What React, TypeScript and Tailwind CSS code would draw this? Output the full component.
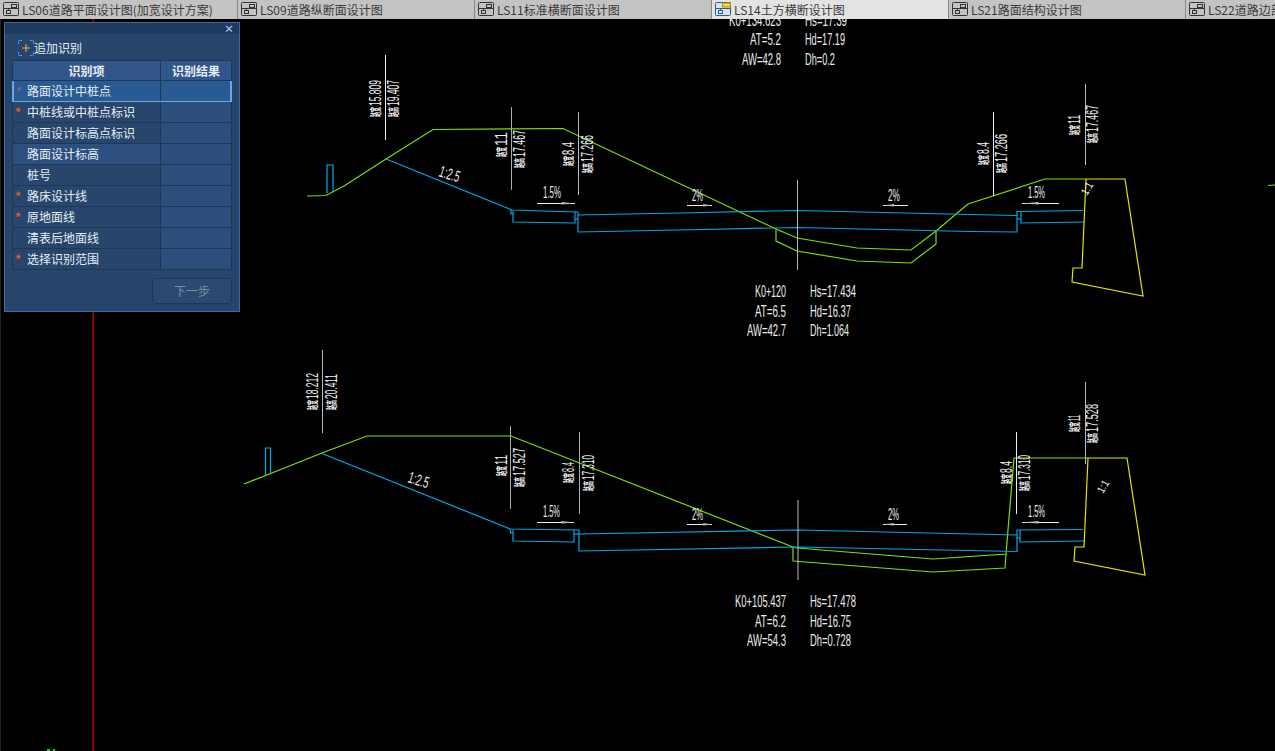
const tabs = [
  "LS06道路平面设计图(加宽设计方案)",
  "LS09道路纵断面设计图",
  "LS11标准横断面设计图",
  "LS14土方横断设计图",
  "LS21路面结构设计图",
  "LS22道路边部设计图",
];

const rows = [
  { label: "路面设计中桩点", star: "gray", active: true },
  { label: "中桩线或中桩点标识", star: "red" },
  { label: "路面设计标高点标识" },
  { label: "路面设计标高", light: true },
  { label: "桩号" },
  { label: "路床设计线", star: "red" },
  { label: "原地面线", star: "red" },
  { label: "清表后地面线" },
  { label: "选择识别范围", star: "red" },
];

const GREEN = "#7ce000";
const BLUE = "#00a8e8";
const YELLOW = "#e6e600";

function TabIcon({ active }: { active: boolean }) {
  const c = active ? "#1f5fa8" : "#333";
  return (
    <svg width="17" height="15" viewBox="0 0 17 15" className="shrink-0" fill="none">
      <rect x="0.5" y="0.5" width="15" height="13" rx="1" stroke={c} />
      {active && <rect x="7.5" y="1" width="8" height="4" fill="#f5d33a" stroke="#b58a00" />}
      {!active && <rect x="8.5" y="2.5" width="5" height="3" stroke={c} />}
      <rect x="3.5" y="8.5" width="4" height="3" stroke={c} />
      <path d="M1 6.5H15M5.5 6.5V8.5" stroke={c} />
    </svg>
  );
}

function Line({ p, c, w = 1.2 }: { p: string; c: string; w?: number }) {
  return <polyline points={p} fill="none" stroke={c} strokeWidth={w} />;
}

function Lbl({ x, y, w, s, size = 16 }: { x: number; y: number; w: number; s: string; size?: number }) {
  return (
    <text x={x} y={y} fontSize={size} fill="#ececec" textLength={w} lengthAdjust="spacingAndGlyphs">
      {s}
    </text>
  );
}

// vertical label: small chinese prefix then the number, reading upward
function V({ x, y, len, pre, num }: { x: number; y: number; len: number; pre: string; num: string }) {
  return (
    <g transform={`translate(${x} ${y}) rotate(-90)`} fill="#f0f0f0">
      <text x={0} y={-1} fontSize={11} fontWeight={700} textLength={10} lengthAdjust="spacingAndGlyphs">
        {pre}
      </text>
      <text x={11} y={0} fontSize={16} textLength={len - 11} lengthAdjust="spacingAndGlyphs">
        {num}
      </text>
    </g>
  );
}

function Slope({ s, x, y, w, x1, x2, ly, flip }: { s: string; x: number; y: number; w: number; x1: number; x2: number; ly: number; flip?: boolean }) {
  const mid = flip ? x1 + (x2 - x1) * 0.45 : x1 + (x2 - x1) * 0.65;
  return (
    <g>
      <Lbl x={x} y={y} w={w} s={s} size={16} />
      <line x1={x1} x2={x2} y1={ly + 0.5} y2={ly + 0.5} stroke="#f0f0f0" />
      {flip ? (
        <polygon points={`${x1},${ly + 0.5} ${mid},${ly - 1} ${mid},${ly + 1.5}`} fill="#bbb" />
      ) : (
        <polygon points={`${mid},${ly - 1} ${x2},${ly + 0.5} ${mid},${ly + 1.5}`} fill="#bbb" />
      )}
    </g>
  );
}

function Cad() {
  return (
    <svg
      viewBox="0 19 1275 732"
      className="block h-full w-full [font-family:'Liberation_Sans','Noto_Sans_CJK_SC',sans-serif]"
    >
      <line x1="93.300" x2="93.300" y1="19" y2="751" stroke="#b00000" strokeWidth="1.600" />
      <line x1="0.5" x2="0.5" y1="19" y2="751" stroke="#222" />
      <line x1="1268" x2="1275" y1="185.5" y2="185" stroke={GREEN} />
      <rect x="47" y="749" width="3" height="2" fill="#00d800" />
      <rect x="53" y="749" width="2" height="2" fill="#00d800" />

      {/* top section remainder */}
      <Lbl x={729} y={26} w={52} s="K0+134.623" />
      <Lbl x={805} y={26} w={42} s="Hs=17.39" />
      <Lbl x={750} y={45} w={31} s="AT=5.2" />
      <Lbl x={805} y={45} w={40} s="Hd=17.19" />
      <Lbl x={742} y={65} w={39} s="AW=42.8" />
      <Lbl x={805} y={65} w={30} s="Dh=0.2" />

      {/* section K0+120 */}
      <Line c={BLUE} p="327,193 327,165 333,165 333,192" />
      <Line c={GREEN} p="307,196 326,195.5 344,186 386,159 433,129.5 563,128.5 776,229 797,238 857,248 911,250 936,231 968,204 1045,179 1086,179" />
      <Line c={GREEN} p="776,229 776,241 797,251 857,261 911,263 936,244 936,231" />
      <Line c={BLUE} p="386,159 512,210 576,212 578,212" />
      <Line c={BLUE} p="511,210 511,214 513,214" />
      <Line c={BLUE} p="513,211 513,222 575,223 575,212" />
      <Line c={BLUE} p="575,219 578,219" />
      <Line c={BLUE} p="578,212 578,232 680,230 797,227.5 970,231.5 1017,232 1017,211.5 1083,210.5" />
      <Line c={BLUE} p="578,215 680,213 797,210.5 970,214.5 1017,215.5" />
      <Line c={BLUE} p="1017,219 1021,219" />
      <Line c={BLUE} p="1021,212 1021,223 1084,222" />
      <Line c={YELLOW} p="1086,179 1125,179 1143,296 1072,282 1073,268 1082,268 1086,179" />

      <line x1="385.5" x2="385.5" y1="55" y2="140" stroke="#eee" />
      <line x1="511.5" x2="511.5" y1="107" y2="190" stroke="#aaa" />
      <line x1="578.5" x2="578.5" y1="112" y2="195" stroke="#bbb" />
      <line x1="797.5" x2="797.5" y1="180" y2="270" stroke="#bbb" />
      <line x1="993.5" x2="993.5" y1="112" y2="196" stroke="#eee" />
      <line x1="1085.5" x2="1085.5" y1="84" y2="165" stroke="#bbb" />

      <V x={381} y={117} len={37} pre="路宽" num="15.809" />
      <V x={399} y={117} len={37} pre="路高" num="19.407" />
      <V x={507} y={157} len={25} pre="路宽" num="11" />
      <V x={525} y={168} len={38} pre="路高" num="17.467" />
      <V x={574} y={166} len={24} pre="路宽" num="8.4" />
      <V x={593} y={173} len={38} pre="路高" num="17.266" />
      <V x={989} y={165} len={23} pre="路宽" num="8.4" />
      <V x={1007} y={173} len={39} pre="路高" num="17.266" />
      <V x={1080} y={135} len={20} pre="路宽" num="11" />
      <V x={1098} y={143} len={38} pre="路高" num="17.467" />

      <g transform="translate(438 176) rotate(18)">
        <Lbl x={0} y={0} w={21} s="1:2.5" size={16} />
      </g>
      <Slope s="1.5%" x={543} y={198} w={18} x1={537} x2={575} ly={203} />
      <Slope s="2%" x={692} y={201} w={11} x1={687} x2={712} ly={205} />
      <Slope s="2%" x={888} y={201} w={12} x1={883} x2={908} ly={205} flip />
      <Slope s="1.5%" x={1028} y={198} w={17} x1={1022} x2={1059} ly={203} flip />
      <g transform="translate(1087 196) rotate(-60)">
        <Lbl x={0} y={0} w={13} s="1:1" size={11} />
      </g>

      <Lbl x={755} y={297} w={31} s="K0+120" />
      <Lbl x={810} y={297} w={46} s="Hs=17.434" />
      <Lbl x={755} y={317} w={31} s="AT=6.5" />
      <Lbl x={810} y={317} w={41} s="Hd=16.37" />
      <Lbl x={747} y={336} w={39} s="AW=42.7" />
      <Lbl x={810} y={336} w={39} s="Dh=1.064" />

      {/* section K0+105.437 */}
      <Line c={BLUE} p="265.5,475 265.5,448 270.5,448 270.5,473" />
      <Line c={GREEN} p="244,484 322,453 367,436 511,436 793,547 797,548 933,559 1006,554 1014,458 1087,458" />
      <Line c={GREEN} p="793,547 793,561 933,572 1005,568 1006,554" />
      <Line c={BLUE} p="322,453.5 510.5,529 579,530" />
      <Line c={BLUE} p="510.5,529 510.5,533 513,533" />
      <Line c={BLUE} p="513,530 513,541 574,542 574,530" />
      <Line c={BLUE} p="574,534 579,534" />
      <Line c={BLUE} p="579,530 579,551 797,547 1017,551.5 1017,530 1083,529.5" />
      <Line c={BLUE} p="579,534 797,530 1017,535" />
      <Line c={BLUE} p="1017,538 1020,538" />
      <Line c={BLUE} p="1020,530 1020,542 1084,541" />
      <Line c={YELLOW} p="1087,458 1127,458 1145,575 1074,561 1075,547 1084,547 1088,458" />

      <line x1="322.5" x2="322.5" y1="350" y2="433" stroke="#bbb" />
      <line x1="510.5" x2="510.5" y1="426" y2="509" stroke="#aaa" />
      <line x1="579.5" x2="579.5" y1="432" y2="514" stroke="#aaa" />
      <line x1="798" x2="798" y1="500" y2="580" stroke="#bbb" />
      <line x1="1016.5" x2="1016.5" y1="432" y2="514" stroke="#eee" />
      <line x1="1085.5" x2="1085.5" y1="382" y2="464" stroke="#bbb" />

      <V x={318} y={410} len={37} pre="路宽" num="18.212" />
      <V x={337} y={410} len={36} pre="路高" num="20.411" />
      <V x={507} y={476} len={21} pre="路宽" num="11" />
      <V x={525} y={487} len={39} pre="路高" num="17.527" />
      <V x={574} y={483} len={21} pre="路宽" num="8.4" />
      <V x={594} y={491} len={36} pre="路高" num="17.310" />
      <V x={1012} y={484} len={23} pre="路宽" num="8.4" />
      <V x={1030} y={491} len={36} pre="路高" num="17.310" />
      <V x={1080} y={432} len={17} pre="路宽" num="11" />
      <V x={1098} y={443} len={39} pre="路高" num="17.528" />

      <g transform="translate(407 482) rotate(18)">
        <Lbl x={0} y={0} w={21} s="1:2.5" size={16} />
      </g>
      <Slope s="1.5%" x={543} y={517} w={17} x1={537} x2={574} ly={522} />
      <Slope s="2%" x={692} y={520} w={11} x1={687} x2={712} ly={524} />
      <Slope s="2%" x={888} y={520} w={11} x1={883} x2={907} ly={524} flip />
      <Slope s="1.5%" x={1028} y={517} w={17} x1={1022} x2={1059} ly={522} flip />
      <g transform="translate(1103 494) rotate(-60)">
        <Lbl x={0} y={0} w={13} s="1:1" size={11} />
      </g>

      <Lbl x={735} y={607} w={51} s="K0+105.437" />
      <Lbl x={810} y={607} w={46} s="Hs=17.478" />
      <Lbl x={755} y={627} w={31} s="AT=6.2" />
      <Lbl x={810} y={627} w={41} s="Hd=16.75" />
      <Lbl x={747} y={646} w={39} s="AW=54.3" />
      <Lbl x={810} y={646} w={41} s="Dh=0.728" />
    </svg>
  );
}

function Panel() {
  return (
    <div className="absolute left-[4px] top-[3px] w-[236px] h-[290px] bg-[#28466c] border border-[#3f69a3] flex flex-col text-[12px] leading-none text-[#e6edf5]">
      <div className="h-[11px] shrink-0 bg-[#1f3a5c] flex items-center justify-end pr-[5px]">
        <span className="text-[10px] font-bold text-[#b8cfe8] leading-none">×</span>
      </div>
      <div className="h-[25px] mt-[1px] pl-[13px] flex items-center shrink-0">
        <svg width="16" height="16" viewBox="0 0 16 16" fill="none" className="shrink-0">
          <path d="M4 .5H1.500a1 1 0 0 0-1 1V4M12 .5h2.500a1 1 0 0 1 1 1V4M4 15.500H1.500a1 1 0 0 1-1-1V12M12 15.500h2.500a1 1 0 0 0 1-1V12" stroke="#4a9bf0" />
          <path d="M8 4v8M4 8h8" stroke="#eaa36a" />
        </svg>
        <span>追加识别</span>
      </div>
      <div className="mx-[7px] border border-[#1e3657] border-b-0 shrink-0">
        <div className="flex h-[20px] bg-[#30568a] font-bold border-b border-[#1e3657]">
          <div className="w-[148px] flex items-center justify-center border-r border-[#1e3657]">识别项</div>
          <div className="flex-1 flex items-center justify-center">识别结果</div>
        </div>
        {rows.map((r) => (
          <div
            key={r.label}
            className={`flex h-[21px] border-b ${r.active ? "bg-[#2a5a92] border-x-2 border-x-[#6aa6e8] border-b-[#6aa6e8] -mx-px" : "border-[#1e3657]"}`}
          >
            <div
              className={`flex items-center border-r border-[#1e3657] ${r.active ? "w-[147px]" : r.light ? "w-[148px] bg-[#2e5080]" : "w-[148px] bg-[#28466c]"}`}
            >
              <span
                className={`pl-[2px] text-[12px] font-bold ${r.active ? "w-[13px]" : "w-[14px]"} ${r.star === "red" ? "text-[#e8591a]" : "text-[#7c6a70]"}`}
              >
                {r.star ? "*" : ""}
              </span>
              <span>{r.label}</span>
            </div>
            <div className={`flex-1 ${r.active ? "" : "bg-[#2c4e7c]"}`} />
          </div>
        ))}
      </div>
      <div className="mt-[8px] mr-[7px] self-end w-[80px] h-[26px] rounded-[4px] border border-[#1e3657] bg-[#2a4a74] flex items-center justify-center text-[#7f8c9c]">
        下一步
      </div>
    </div>
  );
}

export default function App() {
  return (
    <div className="w-[1275px] h-[751px] overflow-hidden bg-black flex flex-col [font-family:'Noto_Sans_CJK_SC','Liberation_Sans',sans-serif]">
      <div className="h-[19px] shrink-0 flex bg-[#c3c3c3]">
        {tabs.map((t, i) => (
          <div
            key={t}
            className={`w-[237px] shrink-0 h-full flex items-center gap-[2px] pl-[3px] text-[12px] leading-none whitespace-nowrap overflow-hidden text-[#3a3a3a] ${
              i === 0 ? "" : "border-l border-[#8a8a8a]"
            } ${i === 3 ? "bg-[#e3e3e3]" : ""}`}
          >
            <TabIcon active={i === 3} />
            <span>{t}</span>
          </div>
        ))}
      </div>
      <div className="relative flex-1 min-h-0">
        <Cad />
        <Panel />
      </div>
    </div>
  );
}
